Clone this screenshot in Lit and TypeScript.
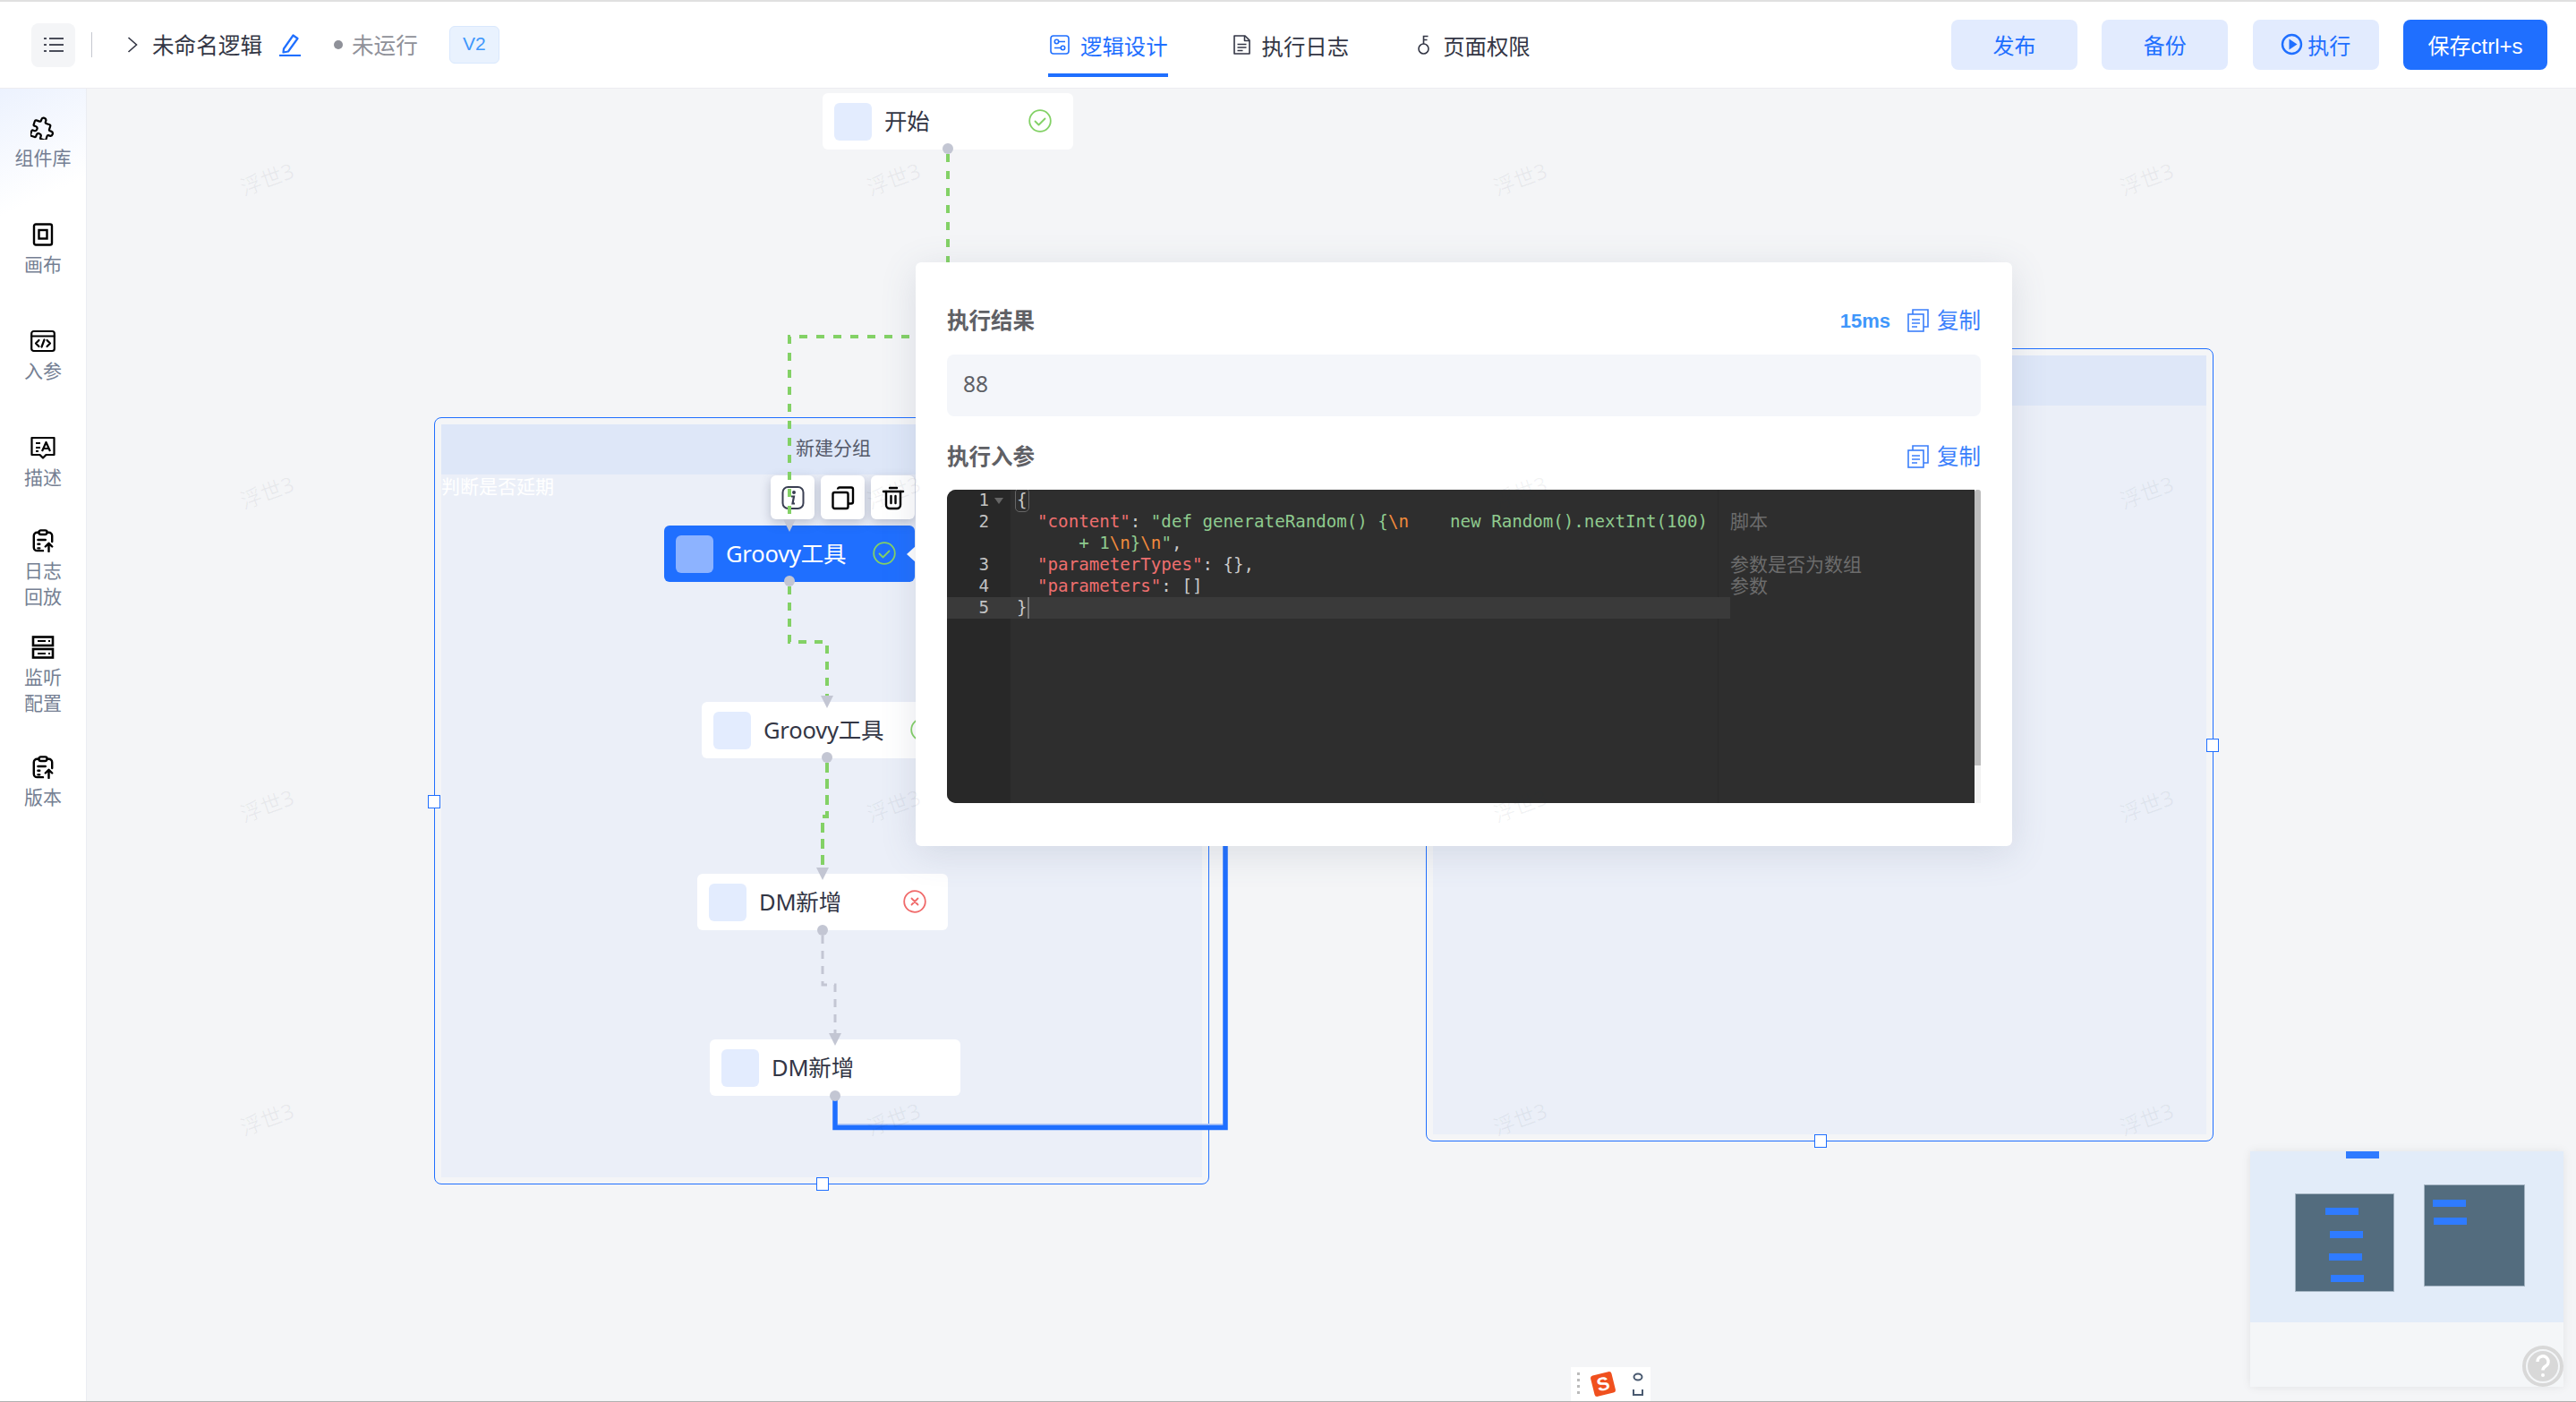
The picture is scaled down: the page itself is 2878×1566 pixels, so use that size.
import { LitElement, html, css, svg } from "lit";
import { customElement } from "lit/decorators.js";

const BLUE = "#1f6fff";
const GREEN = "#83d166";
const GRAY = "#c3c6d3";

const clipboardIcon = html`<svg class="side-icon" viewBox="0 0 28 28" fill="none" stroke="#000" stroke-width="2.6" stroke-linecap="round" stroke-linejoin="round">
  <path d="M9 4H7a4 4 0 0 0-4 4v14a4 4 0 0 0 4 4h7M19 4h2a4 4 0 0 1 4 4v7" />
  <rect x="9" y="1.5" width="10" height="5" rx="2.4" />
  <path d="M8 13h9M8 18h2M8 23h2" />
  <path d="M21 27v-9M17 21l4-4 4 4" />
</svg>`;

const sideItems = [
  {
    label: ["组件库"],
    top: 31,
    icon: html`<svg class="side-icon" viewBox="2 2 20 20" fill="none" stroke="#000" stroke-width="1.7" stroke-linejoin="round">
      <path transform="rotate(18 12 12) translate(0.5 0.5)" d="M4 7h3a1 1 0 0 0 1-1v-1a2 2 0 0 1 4 0v1a1 1 0 0 0 1 1h3a1 1 0 0 1 1 1v3a1 1 0 0 0 1 1h1a2 2 0 0 1 0 4h-1a1 1 0 0 0-1 1v3a1 1 0 0 1-1 1h-3a1 1 0 0 1-1-1v-1a2 2 0 0 0-4 0v1a1 1 0 0 1-1 1h-3a1 1 0 0 1-1-1v-3a1 1 0 0 1 1-1h1a2 2 0 0 0 0-4h-1a1 1 0 0 1-1-1v-3a1 1 0 0 1 1-1" />
    </svg>`,
  },
  {
    label: ["画布"],
    top: 58.5,
    icon: html`<svg class="side-icon" viewBox="0 0 26 26" fill="none" stroke="#000" stroke-width="2.4">
      <rect x="3" y="1.5" width="20" height="23" rx="2" />
      <rect x="8.5" y="8" width="9" height="9.5" />
    </svg>`,
  },
  {
    label: ["入参"],
    top: 58.5,
    icon: html`<svg class="side-icon" viewBox="0 0 28 26" fill="none" stroke="#000" stroke-width="2.2" stroke-linecap="round" stroke-linejoin="round">
      <rect x="1.2" y="2" width="25.6" height="22" rx="2.5" />
      <path d="M1.2 7.5h25.6" />
      <path d="M9.5 12l-3.5 3.5 3.5 3.5M18.5 12l3.5 3.5-3.5 3.5M15.5 11.5l-3 8" />
    </svg>`,
  },
  {
    label: ["描述"],
    top: 58.5,
    icon: html`<svg class="side-icon" viewBox="0 0 28 26" fill="none" stroke="#000" stroke-width="2.2" stroke-linejoin="round">
      <path d="M1.5 2h25v19h-9l-3.5 3.5-3.5-3.5h-9z" />
      <path d="M6 8h5M6 13h5M6 17h3" />
      <path d="M13 17l4.5-10 4.5 10M14.5 14h6" />
    </svg>`,
  },
  { label: ["日志", "回放"], top: 43.5, icon: clipboardIcon },
  {
    label: ["监听", "配置"],
    top: 30,
    icon: html`<svg class="side-icon" viewBox="0 0 28 26" fill="none" stroke="#000" stroke-width="2.6">
      <rect x="3" y="1.5" width="22" height="9.5" />
      <rect x="3" y="15" width="22" height="9.5" />
      <path d="M8 6h9M20 6h2M8 20h9M20 20h2" stroke-width="2" />
    </svg>`,
  },
  { label: ["版本"], top: 45, icon: clipboardIcon },
];

const tabs = [
  {
    label: "逻辑设计",
    active: true,
    kind: "wide",
    icon: html`<svg class="tab-icon" viewBox="0 0 22 22" fill="none" stroke="currentColor" stroke-width="1.6">
      <rect x="1" y="1" width="20" height="20" rx="3" />
      <circle cx="7.5" cy="7.5" r="2.2" />
      <circle cx="14.5" cy="14.5" r="2.2" />
      <path d="M10 7.5h7M5 14.5h7" />
    </svg>`,
  },
  {
    label: "执行日志",
    active: false,
    kind: "doc",
    icon: html`<svg class="tab-icon" viewBox="0 0 19 22" fill="none" stroke="currentColor" stroke-width="1.6" stroke-linejoin="round">
      <path d="M1 1h12l5 5v15H1z" />
      <path d="M12.5 1v5.500H18M4.500 10.500h10M4.500 14h10M4.500 17.500h6" />
    </svg>`,
  },
  {
    label: "页面权限",
    active: false,
    kind: "key",
    icon: html`<svg class="tab-icon" viewBox="0 0 13 22" fill="none" stroke="currentColor" stroke-width="1.6">
      <circle cx="6.500" cy="15.500" r="5.500" />
      <path d="M6.500 10V1.500h5M6.500 5.500h4" />
    </svg>`,
  },
];

const copyIcon = html`<svg class="copy-icon" viewBox="0 0 24 26" fill="none" stroke="currentColor" stroke-width="1.6">
  <rect x="1" y="6" width="17" height="19" />
  <path d="M6 6V1h17v19h-5M5 12h9M5 16h9M5 20h6" />
</svg>`;

const okIcon = html`<svg class="status" viewBox="0 0 26 26" fill="none" stroke="${GREEN}" stroke-width="1.8" stroke-linecap="round" stroke-linejoin="round">
  <circle cx="13" cy="13" r="11.8" />
  <path d="M7.5 13.5l4 4 7-7" />
</svg>`;

const failIcon = html`<svg class="status" viewBox="0 0 26 26" fill="none" stroke="#f06a6a" stroke-width="1.8" stroke-linecap="round">
  <circle cx="13" cy="13" r="11.8" />
  <path d="M9.500 9.500l7 7M16.500 9.500l-7 7" />
</svg>`;

// diagram data, in page coordinates; the canvas starts below the top bar
const CANVAS_Y = 99;

const nodes = [
  { x: 919, y: 104, label: "开始", state: "ok", statusX: 243 },
  { x: 742, y: 587, label: "Groovy工具", state: "ok", active: true, statusX: 246 },
  { x: 784, y: 784, label: "Groovy工具", state: "ok", statusX: 246 },
  { x: 779, y: 976, label: "DM新增", state: "fail", statusX: 243 },
  { x: 793, y: 1161, label: "DM新增", state: "none", statusX: 243 },
];

const groups = [
  { x: 485, y: 466, w: 866, h: 857, title: "新建分组", sub: "判断是否延期", titleOffset: 396 },
  { x: 1593, y: 389, w: 880, h: 886, title: "", sub: "", titleOffset: 0 },
];

const handles = [
  [485, 896],
  [919, 1323],
  [2472, 833],
  [2034, 1275],
];

const ports = [
  [1059, 166],
  [882, 649],
  [924, 846],
  [919, 1039],
  [933, 1224],
];

const arrows: [number, number][] = [
  [882, 580],
  [924, 777],
  [919, 969],
  [933, 1154],
];

const watermarkCount = 16;

const minimapBars = [
  [2621, 1286],
  [2598, 1349],
  [2603, 1375],
  [2602, 1400],
  [2604, 1424],
  [2718, 1340],
  [2719, 1360],
];

const codeLines: { n: string; html: unknown; note?: string; active?: boolean }[] = [
  { n: "1", html: html`<span class="match">{</span>` },
  {
    n: "2",
    html: html`  <span class="k">"content"</span><span class="p">: </span><span class="s">"def generateRandom() {<span class="e">\\n</span>    new Random().nextInt(100)</span>`,
    note: "脚本",
  },
  { n: "", html: html`      <span class="s">+ 1<span class="e">\\n</span>}<span class="e">\\n</span>"</span><span class="p">,</span>` },
  { n: "3", html: html`  <span class="k">"parameterTypes"</span><span class="p">: {},</span>`, note: "参数是否为数组" },
  { n: "4", html: html`  <span class="k">"parameters"</span><span class="p">: []</span>`, note: "参数" },
  { n: "5", html: html`<span class="p">}</span><span class="cursor"></span>`, active: true },
];

@customElement("flow-node")
class FlowNode extends LitElement {
  static properties = {
    label: { type: String },
    state: { type: String },
    active: { type: Boolean },
    statusX: { type: Number },
  };
  label = "";
  state = "none";
  active = false;
  statusX = 243;

  static styles = css`
    :host {
      display: block;
    }
    .node {
      width: 280px;
      height: 63px;
      box-sizing: border-box;
      padding: 0 13px;
      display: flex;
      align-items: center;
      gap: 14px;
      background: #fff;
      border-radius: 6px;
      color: #333645;
      font-size: 25.5px;
      position: relative;
    }
    .node.active {
      background: #1f6fff;
      color: #fff;
    }
    .thumb {
      width: 42px;
      height: 42px;
      border-radius: 6px;
      background: #e3ecfe;
      flex: none;
    }
    .active .thumb {
      background: #8db3ff;
    }
    .status-wrap {
      position: absolute;
      top: 18px;
      width: 26px;
      height: 26px;
    }
    .status {
      display: block;
      width: 26px;
      height: 26px;
    }
    .label {
      white-space: nowrap;
      letter-spacing: -0.2px;
      padding-bottom: 4px;
    }
  `;

  render() {
    return html`<div class="node ${this.active ? "active" : ""}">
      <div class="thumb"></div>
      <div class="label">${this.label}</div>
      ${this.state === "none"
        ? ""
        : html`<div class="status-wrap" style="left:${this.statusX - 13}px">
            ${this.state === "ok" ? okIcon : failIcon}
          </div>`}
    </div>`;
  }
}

@customElement("result-panel")
class ResultPanel extends LitElement {
  static styles = css`
    :host {
      display: block;
      position: absolute;
      left: 1023px;
      top: 194px;
      width: 1225px;
      height: 652px;
      box-sizing: border-box;
      padding: 0 35px;
      background: #fff;
      border-radius: 6px;
      box-shadow: 0 8px 40px rgba(90, 100, 130, 0.16);
      z-index: 5;
    }
    .head {
      height: 46px;
      display: flex;
      align-items: center;
      justify-content: space-between;
    }
    .head.first {
      margin-top: 42px;
    }
    .head.second {
      margin-top: 22px;
    }
    .title {
      font-size: 24.5px;
      font-weight: 700;
      color: #5f6065;
      padding-bottom: 3px;
    }
    .actions {
      display: flex;
      align-items: center;
      color: #3b7ffb;
      font-size: 24.5px;
    }
    .copy-text {
      padding-bottom: 3px;
    }
    .ms {
      font-family: "Liberation Sans", sans-serif;
      font-weight: 700;
      font-size: 22px;
      color: #3f97fb;
      margin-right: 19px;
      padding-top: 2px;
    }
    .copy-icon {
      width: 24px;
      height: 26px;
      margin-right: 9px;
    }
    .value {
      margin-top: 15px;
      height: 69px;
      box-sizing: border-box;
      padding: 0 18px 5px;
      display: flex;
      align-items: center;
      background: #f4f6fa;
      border-radius: 8px;
      color: #5e6066;
      font-size: 24.5px;
    }
    .editor {
      margin-top: 14px;
      height: 350px;
      display: flex;
      position: relative;
    }
    .code {
      width: 1148px;
      height: 350px;
      background: #2e2e2e;
      border-radius: 10px 0 0 10px;
      position: relative;
      overflow: hidden;
      font-family: "DejaVu Sans Mono", "Noto Sans CJK SC", monospace;
      font-size: 19.15px;
      line-height: 24px;
    }
    .gutter-bg {
      position: absolute;
      left: 0;
      top: 0;
      bottom: 0;
      width: 71px;
      background: #282828;
    }
    .note-rule {
      position: absolute;
      left: 861px;
      top: 0;
      bottom: 0;
      width: 1px;
      background: #292929;
    }
    .row {
      position: relative;
      height: 24px;
      display: flex;
      white-space: pre;
    }
    .row.active::before {
      content: "";
      position: absolute;
      left: 0;
      top: 0;
      width: 875px;
      height: 24px;
      background: #3a3a3a;
    }
    .num {
      position: relative;
      width: 47px;
      text-align: right;
      color: #c2c2c2;
      flex: none;
    }
    .fold {
      position: absolute;
      left: 53px;
      top: 9px;
      width: 0;
      height: 0;
      border: 5px solid transparent;
      border-top: 7px solid #666;
    }
    .txt {
      position: relative;
      margin-left: 31px;
      color: #c9c9c9;
      width: 797px;
      flex: none;
    }
    .note {
      position: absolute;
      left: 875px;
      top: -2px;
      font-family: "Noto Sans CJK SC", sans-serif;
      font-size: 21px;
      color: #6c6c6c;
    }
    .k {
      color: #ee6f6f;
    }
    .s {
      color: #8fcb8f;
    }
    .e {
      color: #f08a3c;
    }
    .p {
      color: #c9c9c9;
    }
    .match {
      color: #c9c9c9;
      outline: 1px solid #666;
      outline-offset: 1px;
      border-radius: 3px;
    }
    .cursor {
      display: inline-block;
      width: 2px;
      height: 24px;
      background: #777;
      vertical-align: top;
    }
    .scroll {
      width: 7px;
      background: #f2f2f2;
      border-radius: 3px 3px 0 0;
      position: relative;
    }
    .scroll::before {
      content: "";
      position: absolute;
      left: 0;
      right: 0;
      top: 0;
      height: 308px;
      background: #bdbdbd;
      border-radius: 3px 3px 0 0;
    }
  `;

  render() {
    return html`
      <div class="head first">
        <div class="title">执行结果</div>
        <div class="actions"><span class="ms">15ms</span>${copyIcon}<span class="copy-text">复制</span></div>
      </div>
      <div class="value">88</div>
      <div class="head second">
        <div class="title">执行入参</div>
        <div class="actions">${copyIcon}<span class="copy-text">复制</span></div>
      </div>
      <div class="editor">
        <div class="code">
          <div class="gutter-bg"></div>
          <div class="note-rule"></div>
          ${codeLines.map(
            (line, i) => html`<div class="row ${line.active ? "active" : ""}">
              <div class="num">${line.n}</div>
              ${i === 0 ? html`<div class="fold"></div>` : ""}
              <div class="txt">${line.html}</div>
              ${line.note ? html`<div class="note">${line.note}</div>` : ""}
            </div>`,
          )}
        </div>
        <div class="scroll"></div>
      </div>
    `;
  }
}

@customElement("app-root")
class AppRoot extends LitElement {
  static styles = css`
    :host {
      display: block;
      width: 2878px;
      height: 1566px;
      overflow: hidden;
      position: relative;
      font-family: "Noto Sans", "Noto Sans CJK SC", sans-serif;
      background: #f4f5f7;
    }
    .topline {
      height: 2px;
      background: #e0e0e0;
    }
    .bar {
      height: 97px;
      box-sizing: border-box;
      background: #fff;
      border-bottom: 1px solid #ececf0;
      display: grid;
      grid-template-columns: 1171px 1009px 1fr;
      align-items: center;
    }
    .bar-left {
      display: flex;
      align-items: center;
      padding-left: 35px;
      color: #333645;
    }
    .list-btn {
      width: 49px;
      height: 49px;
      border-radius: 8px;
      background: #f4f5f7;
      display: flex;
      align-items: center;
      justify-content: center;
    }
    .divider {
      width: 1px;
      height: 28px;
      background: #c5c8d0;
      margin-left: 18px;
    }
    .chevron {
      width: 12px;
      height: 18px;
      margin-left: 39px;
    }
    .name {
      font-size: 24.6px;
      margin-left: 16px;
      padding-bottom: 2px;
    }
    .pen {
      width: 24px;
      height: 26px;
      margin-left: 19px;
    }
    .dot {
      width: 10px;
      height: 10px;
      border-radius: 50%;
      background: #8f9199;
      margin-left: 37px;
    }
    .state {
      font-size: 24.6px;
      color: #8f9199;
      margin-left: 10px;
      padding-bottom: 2px;
    }
    .ver {
      width: 56px;
      height: 42px;
      box-sizing: border-box;
      border: 1px solid #d9e8fd;
      border-radius: 6px;
      background: #e9f2fe;
      color: #3f97fb;
      font-family: "Liberation Sans", sans-serif;
      font-size: 21px;
      display: flex;
      align-items: center;
      justify-content: center;
      margin-left: 35px;
      padding-bottom: 3px;
    }
    .tabs {
      display: flex;
      align-self: start;
      gap: 73px;
    }
    .tab {
      display: flex;
      align-items: center;
      gap: 12px;
      font-size: 24.4px;
      color: #333645;
      height: 84px;
      box-sizing: border-box;
      padding-top: 16px;
      border-bottom: 4px solid transparent;
    }
    .tab.active {
      color: #1f6fff;
      border-bottom-color: #1f6fff;
    }
    .tab-icon {
      display: block;
      height: 22px;
    }
    .wide .tab-icon {
      width: 22px;
      margin-left: 2px;
    }
    .doc .tab-icon {
      width: 19px;
      margin-right: 1px;
    }
    .key .tab-icon {
      width: 13px;
      margin: 0 3px 0 4px;
    }
    .buttons {
      display: flex;
      gap: 27.33px;
      margin-bottom: 1px;
    }
    .btn {
      width: 141px;
      height: 56px;
      border-radius: 8px;
      background: #e2ebfe;
      color: #1f6fff;
      font-family: "Liberation Sans", "Noto Sans CJK SC", sans-serif;
      font-size: 24px;
      display: flex;
      align-items: center;
      justify-content: center;
      gap: 5px;
    }
    .btn.primary {
      width: 161px;
      background: #1f6fff;
      color: #fff;
    }
    .btn svg {
      width: 25px;
      height: 25px;
    }
    .body {
      display: flex;
      height: 1467px;
      position: relative;
    }
    .side {
      width: 97px;
      flex: none;
      box-sizing: border-box;
      background: linear-gradient(155deg, #ecf2fe 0, #fff 130px);
      border-right: 1px solid #ebedf2;
      display: flex;
      flex-direction: column;
      align-items: center;
      position: relative;
      z-index: 2;
    }
    .side-item {
      display: flex;
      flex-direction: column;
      align-items: center;
      gap: 6px;
    }
    .side-icon {
      width: 28px;
      height: 26px;
      display: block;
    }
    .side-text {
      font-size: 21px;
      line-height: 28.5px;
      color: #757f93;
      text-align: center;
      white-space: pre-line;
    }
    .canvas {
      position: absolute;
      left: 0;
      top: 0;
      width: 2878px;
      height: 1467px;
      overflow: hidden;
    }
    .group {
      position: absolute;
      box-sizing: border-box;
      border: 1.5px solid #1f6fff;
      border-radius: 8px;
      padding: 7px;
    }
    .group-inner {
      height: 100%;
      background: #ebeff8;
      position: relative;
    }
    .group-head {
      height: 56px;
      background: #dee7f8;
      font-size: 21px;
      color: #555a6a;
      line-height: 52px;
      white-space: nowrap;
      box-sizing: border-box;
    }
    .group-sub {
      font-size: 21px;
      color: #fff;
      line-height: 26px;
    }
    .handle {
      position: absolute;
      width: 14px;
      height: 15px;
      margin: -8px 0 0 -7px;
      box-sizing: border-box;
      background: #fff;
      border: 1.5px solid #1f6fff;
    }
    .wires {
      position: absolute;
      left: 0;
      top: 0;
      width: 2878px;
      height: 1467px;
      z-index: 4;
      pointer-events: none;
    }
    .placed {
      position: absolute;
    }
    .tools {
      position: absolute;
      left: 861px;
      top: 432px;
      display: flex;
      gap: 7px;
    }
    .tool {
      width: 49px;
      height: 49px;
      background: #fff;
      border-radius: 6px;
      box-shadow: 0 4px 12px rgba(60, 70, 100, 0.28);
      display: flex;
      align-items: center;
      justify-content: center;
    }
    .tool svg {
      width: 28px;
      height: 28px;
    }
    .pointer {
      position: absolute;
      left: 1013px;
      top: 511px;
      width: 0;
      height: 0;
      border: 9px solid transparent;
      border-left: 0;
      border-right: 10px solid #fff;
    }
    .minimap {
      position: absolute;
      left: 2514px;
      top: 1187px;
      width: 350px;
      height: 263px;
      background: #f4f6f8;
      box-shadow: 0 0 10px rgba(0, 0, 0, 0.08);
      z-index: 6;
    }
    .mini-sky {
      height: 191px;
      background: #e2ecf9;
    }
    .mini-rect {
      position: absolute;
      background: #536c7e;
      outline: 1px solid #a4b4c2;
      outline-offset: -1px;
    }
    .mini-bar {
      position: absolute;
      width: 37px;
      height: 8px;
      background: #2f7bff;
    }
    .help {
      position: absolute;
      left: 2818px;
      top: 1404px;
      width: 46px;
      height: 46px;
      z-index: 7;
    }
    .ime {
      position: absolute;
      left: 1755px;
      top: 1428px;
      width: 89px;
      height: 38px;
      background: #fff;
      z-index: 7;
      display: flex;
      align-items: center;
    }
    .ime-dots {
      width: 3px;
      height: 30px;
      margin-left: 7px;
      background: radial-gradient(circle, #bbb 1.5px, transparent 1.6px) 0 0 / 3px 7px repeat-y;
    }
    .ime-logo {
      width: 24px;
      height: 24px;
      margin-left: 14px;
      background: #f0501e;
      border-radius: 3px;
      transform: rotate(-14deg);
      color: #fff;
      font: 700 21px/24px "Liberation Sans", sans-serif;
      text-align: center;
    }
    .ime-mode {
      width: 12px;
      height: 28px;
      margin-left: 21px;
    }
    .bottomline {
      position: absolute;
      left: 0;
      right: 0;
      bottom: 0;
      height: 1px;
      background: #b0b0b0;
      z-index: 8;
    }
    .marks {
      position: absolute;
      left: -52px;
      top: -76px;
      display: grid;
      grid-template-columns: repeat(4, 700px);
      grid-auto-rows: 350px;
      z-index: 9;
      pointer-events: none;
    }
    .mark {
      display: flex;
      align-items: center;
      justify-content: center;
    }
    .mark span {
      font-size: 24px;
      color: rgba(40, 50, 70, 0.06);
      transform: rotate(-20deg);
    }
  `;

  private renderWires() {
    const y = (v: number) => v - CANVAS_Y;
    return html`<svg class="wires" viewBox="0 0 2878 1467" fill="none">
      ${svg`<path d="M1059 ${y(172)}V${y(376)}H882V${y(586)}" stroke="${GREEN}" stroke-width="4" stroke-dasharray="9 10" />
      <path d="M882 ${y(655)}V${y(717)}H924V${y(782)}" stroke="${GREEN}" stroke-width="4" stroke-dasharray="9 9" />
      <path d="M924 ${y(852)}V${y(912)}H919V${y(974)}" stroke="${GREEN}" stroke-width="4" stroke-dasharray="11 7" />
      <path d="M919 ${y(1045)}V${y(1100)}H933V${y(1158)}" stroke="${GRAY}" stroke-width="3" stroke-dasharray="9 8" />
      <path d="M936 ${y(1256)}H1366" stroke="#b4c9f6" stroke-width="2" />
      <path d="M933 ${y(1224)}V${y(1259.5)}H1369V${y(945)}" stroke="${BLUE}" stroke-width="5.5" />`}
      ${arrows.map(
        ([x, top]) => svg`<path d="M${x - 7} ${y(top)}h14l-7 14z" fill="${GRAY}" />`,
      )}
      ${ports.map(
        ([x, py]) => svg`<circle cx="${x}" cy="${y(py)}" r="6" fill="${GRAY}" />`,
      )}
    </svg>`;
  }

  private renderMinimap() {
    const left = 2514;
    const top = 1286;
    return html`<div class="minimap">
      <div class="mini-sky"></div>
      <div class="mini-rect" style="left:${2564 - left}px;top:${1333 - top}px;width:111px;height:110px"></div>
      <div class="mini-rect" style="left:${2708 - left}px;top:${1323 - top}px;width:113px;height:114px"></div>
      ${minimapBars.map(
        ([x, by]) => html`<div class="mini-bar" style="left:${x - left}px;top:${by - top}px"></div>`,
      )}
    </div>`;
  }

  private renderCanvas() {
    return html`<div class="canvas">
      ${groups.map(
        (g) => html`<div
          class="group"
          style="left:${g.x}px;top:${g.y - CANVAS_Y}px;width:${g.w}px;height:${g.h}px"
        >
          <div class="group-inner">
            <div class="group-head" style="padding-left:${g.titleOffset}px">${g.title}</div>
            <div class="group-sub">${g.sub}</div>
          </div>
        </div>`,
      )}
      ${handles.map(
        ([x, hy]) => html`<div class="handle" style="left:${x}px;top:${hy - CANVAS_Y}px"></div>`,
      )}
      ${nodes.map(
        (n) => html`<flow-node
          class="placed"
          style="left:${n.x}px;top:${n.y - CANVAS_Y}px"
          .label=${n.label}
          .state=${n.state}
          .active=${!!n.active}
          .statusX=${n.statusX}
        ></flow-node>`,
      )}
      <div class="tools">
        <div class="tool">
          <svg viewBox="0 0 28 28" fill="none" stroke="#3a3f52" stroke-width="2">
            <rect x="2.5" y="2" width="23" height="24" rx="6" />
            <path d="M12 12.500h3l-1.500 8h2.500" stroke-width="2.2" />
            <circle cx="15" cy="8" r="1" fill="#3a3f52" />
          </svg>
        </div>
        <div class="tool">
          <svg viewBox="0 0 28 28" fill="none" stroke="#000" stroke-width="2.4" stroke-linejoin="round">
            <rect x="2.5" y="8" width="17" height="18" rx="2" />
            <path d="M8 4.500a2 2 0 0 1 2-2h13a2 2 0 0 1 2 2v14a2 2 0 0 1-2 2h-3" />
          </svg>
        </div>
        <div class="tool">
          <svg viewBox="0 0 28 28" fill="none" stroke="#000" stroke-width="2.4" stroke-linecap="round">
            <path d="M3 7h22M10 3h8" />
            <path d="M6 7v15a4 4 0 0 0 4 4h8a4 4 0 0 0 4-4V7" />
            <path d="M11.500 12v8M16.500 12v8" />
          </svg>
        </div>
      </div>
      <div class="pointer"></div>
      ${this.renderWires()}
      <result-panel></result-panel>
      ${this.renderMinimap()}
      <svg class="help" viewBox="0 0 46 46" fill="none">
        <circle cx="23" cy="23" r="21" stroke="#d8d8d8" stroke-width="4" />
        <circle cx="23" cy="23" r="17" fill="#d8d8d8" />
        <path d="M17 18a6 6 0 1 1 9 5c-2 1.2-3 2.2-3 4.500" stroke="#fff" stroke-width="3.5" />
        <circle cx="23" cy="33" r="2" fill="#fff" />
      </svg>
      <div class="ime">
        <div class="ime-dots"></div>
        <div class="ime-logo">S</div>
        <svg class="ime-mode" viewBox="0 0 12 28" fill="none" stroke="#4a5a70" stroke-width="2">
          <ellipse cx="6" cy="6" rx="4.5" ry="3.5" />
          <path d="M1 20v6h10v-6" />
        </svg>
      </div>
      <div class="marks">
        ${Array.from({ length: watermarkCount }, () => html`<div class="mark"><span>浮世3</span></div>`)}
      </div>
    </div>`;
  }

  render() {
    return html`
      <div class="topline"></div>
      <div class="bar">
        <div class="bar-left">
          <div class="list-btn">
            <svg width="22" height="20" viewBox="0 0 22 20" fill="none" stroke="#4a4d5a" stroke-width="2">
              <path d="M6 3h16M6 10h16M6 17h16" />
              <path d="M0 3h3M0 10h3M0 17h3" />
            </svg>
          </div>
          <div class="divider"></div>
          <svg class="chevron" viewBox="0 0 12 18" fill="none" stroke="#333645" stroke-width="1.6">
            <path d="M1.500 1l9 8-9 8" />
          </svg>
          <div class="name">未命名逻辑</div>
          <svg class="pen" viewBox="0 0 24 26" fill="none" stroke="${BLUE}" stroke-width="2.2" stroke-linejoin="round">
            <path d="M5 17.500L15.500 2.500l5 3.500L10 20.500l-5.500 1z" />
            <path d="M0 25h24" />
          </svg>
          <div class="dot"></div>
          <div class="state">未运行</div>
          <div class="ver">V2</div>
        </div>
        <div class="tabs">
          ${tabs.map(
            (t) => html`<div class="tab ${t.kind} ${t.active ? "active" : ""}">${t.icon}${t.label}</div>`,
          )}
        </div>
        <div class="buttons">
          <div class="btn">发布</div>
          <div class="btn">备份</div>
          <div class="btn">
            <svg viewBox="0 0 25 25" fill="none" stroke="currentColor" stroke-width="2.4">
              <circle cx="12.5" cy="12.5" r="10.5" />
              <path d="M9.500 6.500l9 6-9 6z" fill="currentColor" stroke="none" />
            </svg>
            执行
          </div>
          <div class="btn primary">保存ctrl+s</div>
        </div>
      </div>
      <div class="body">
        ${this.renderCanvas()}
        <div class="side">
          ${sideItems.map(
            (item) => html`<div class="side-item" style="margin-top:${item.top}px">
              ${item.icon}
              <div class="side-text">${item.label.join("\n")}</div>
            </div>`,
          )}
        </div>
      </div>
      <div class="bottomline"></div>
    `;
  }
}
